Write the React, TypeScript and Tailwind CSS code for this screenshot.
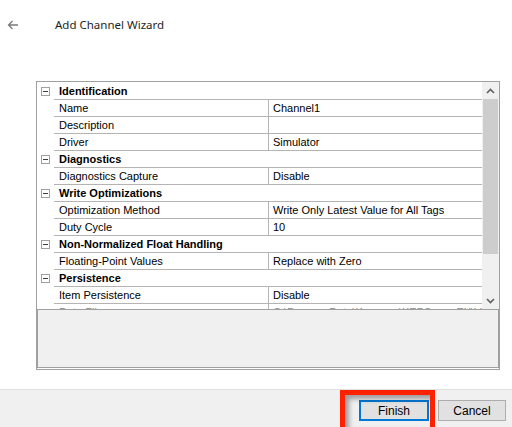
import React from "react";

type Row =
  | { kind: "category"; label: string }
  | { kind: "prop"; label: string; value: string; dim?: boolean };

const rows: Row[] = [
  { kind: "category", label: "Identification" },
  { kind: "prop", label: "Name", value: "Channel1" },
  { kind: "prop", label: "Description", value: "" },
  { kind: "prop", label: "Driver", value: "Simulator" },
  { kind: "category", label: "Diagnostics" },
  { kind: "prop", label: "Diagnostics Capture", value: "Disable" },
  { kind: "category", label: "Write Optimizations" },
  { kind: "prop", label: "Optimization Method", value: "Write Only Latest Value for All Tags" },
  { kind: "prop", label: "Duty Cycle", value: "10" },
  { kind: "category", label: "Non-Normalized Float Handling" },
  { kind: "prop", label: "Floating-Point Values", value: "Replace with Zero" },
  { kind: "category", label: "Persistence" },
  { kind: "prop", label: "Item Persistence", value: "Disable" },
  {
    kind: "prop",
    label: "Data File",
    value: "C:\\ProgramData\\Kepware\\KEPServerEX\\V6\\Ch",
    dim: true,
  },
];

function CollapseBox() {
  return (
    <div className="relative h-[9px] w-[9px] border border-[#a0a0a0] bg-white">
      <div className="absolute left-[1px] top-[3px] h-[1px] w-[5px] bg-[#3c3c3c]" />
    </div>
  );
}

function Chevron({ up }: { up?: boolean }) {
  return (
    <svg width="9" height="6" viewBox="0 0 9 6" className={up ? "" : "rotate-180"}>
      <path d="M1 5 L4.5 1.5 L8 5" fill="none" stroke="#606060" strokeWidth="1.6" />
    </svg>
  );
}

function GridRow({ row }: { row: Row }) {
  if (row.kind === "category") {
    return (
      <div className="flex h-[17px]">
        <div className="flex w-[17px] shrink-0 items-center justify-center">
          <CollapseBox />
        </div>
        <div className="flex flex-1 items-center border-b border-[#b4b4b4] pl-[5px] font-bold text-black">
          {row.label}
        </div>
      </div>
    );
  }
  return (
    <div className="flex h-[17px]">
      <div className="w-[17px] shrink-0" />
      <div className="flex flex-1 border-b border-[#b4b4b4]">
        <div
          className={`flex w-[215px] shrink-0 items-center border-r border-[#b4b4b4] pl-[5px] ${
            row.dim ? "text-[#8a8a8a]" : "text-black"
          }`}
        >
          {row.label}
        </div>
        <div
          className={`flex flex-1 items-center overflow-hidden whitespace-nowrap pl-[4px] ${
            row.dim ? "text-[#8a8a8a]" : "text-black"
          }`}
        >
          {row.value}
        </div>
      </div>
    </div>
  );
}

export default function App() {
  return (
    <div className="relative flex h-[427px] w-[512px] flex-col overflow-hidden bg-white font-['Liberation_Sans',Arial,sans-serif]">
      <div className="flex h-[82px] items-start pt-[17px]">
        <div className="flex h-[16px] items-center">
          <svg width="12" height="10" viewBox="0 0 12 10" className="ml-[7px]">
            <path d="M11 5 H1.5 M5.5 1 L1.5 5 L5.5 9" fill="none" stroke="#7a7a7a" strokeWidth="1.3" />
          </svg>
          <span className="ml-[36px] font-['Noto_Sans',sans-serif] text-[11.5px] text-[#1e1e1e]">
            Add Channel Wizard
          </span>
        </div>
      </div>

      <div className="ml-[36px] flex h-[289px] w-[464px] flex-col border border-[#a0a0a0] text-[11px]">
        <div className="flex h-[227px] overflow-hidden">
          <div className="w-[445px] overflow-hidden pt-[1px]">
            {rows.map((row, i) => (
              <GridRow key={i} row={row} />
            ))}
          </div>
          <div className="flex w-[17px] flex-col bg-[#f0f0f0]">
            <div className="flex h-[17px] items-center justify-center">
              <Chevron up />
            </div>
            <div className="mx-[1px] h-[155px] bg-[#cdcdcd]" />
            <div className="flex-1" />
            <div className="flex h-[17px] items-center justify-center">
              <Chevron />
            </div>
          </div>
        </div>
        <div className="mb-[1px] h-[59px] border border-[#a0a0a0] bg-[#f0f0f0]" />
      </div>

      <div className="h-[19px]" />

      <div className="flex h-[38px] items-start justify-end gap-[9px] border-t border-[#dfdfdf] bg-[#f0f0f0] pr-[6px] pt-[10px] text-[12px]">
        <button className="h-[21px] w-[70px] border-2 border-[#0078d7] bg-[#e1e1e1] text-black">
          Finish
        </button>
        <button className="h-[21px] w-[68px] border border-[#adadad] bg-[#e1e1e1] text-black">
          Cancel
        </button>
      </div>

      <div className="absolute left-[340px] top-[390px] h-[42px] w-[95px] border-[5px] border-[#ff2200] shadow-[inset_4px_4px_5px_rgba(0,0,0,0.35)]" />
    </div>
  );
}
